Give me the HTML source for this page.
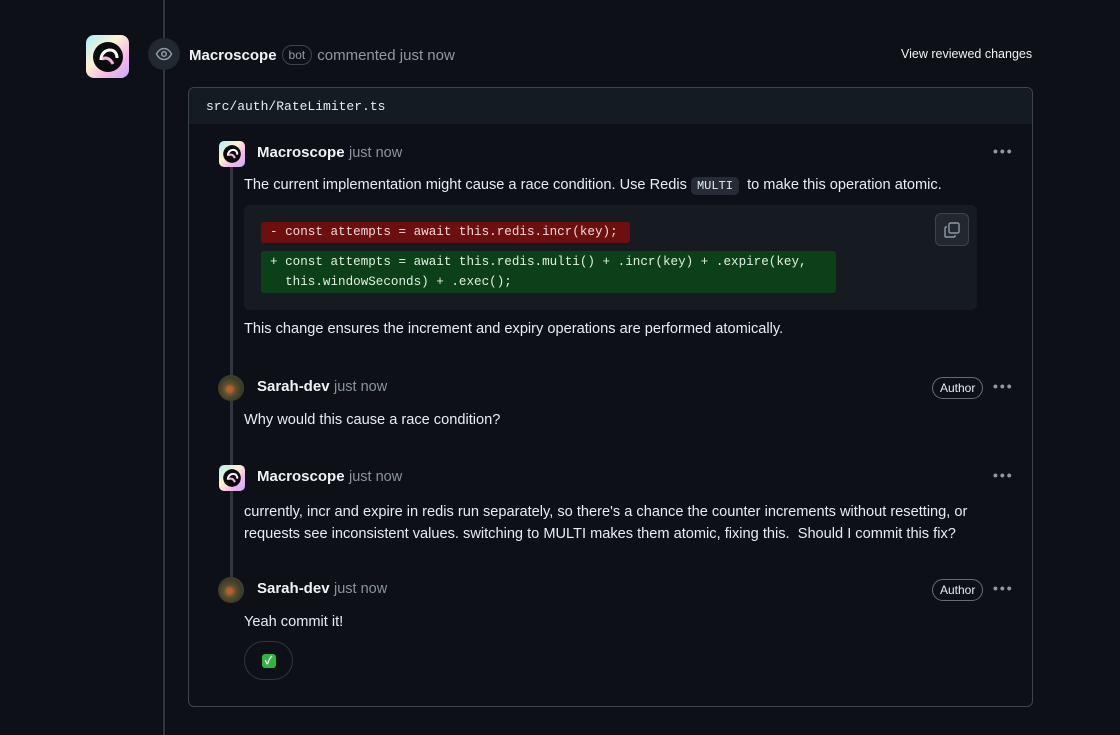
<!DOCTYPE html>
<html><head><meta charset="utf-8"><style>
*{box-sizing:border-box;margin:0;padding:0}
body{width:1120px;height:735px;background:#0d1117;color:#e6edf3;font-family:"Liberation Sans","Noto Sans CJK SC",sans-serif;position:relative;overflow:hidden}
.a{position:absolute}
.mono{font-family:"Liberation Mono",monospace;white-space:nowrap}
.logo{background:linear-gradient(135deg,#a9f0ff,#fff2d0 40%,#f7b8e8 70%,#c8a8ff);display:flex;align-items:center;justify-content:center}
.name{font-weight:bold;font-size:15px;color:#f0f3f6}
.time{color:#8b949e;font-size:14.5px}
.txt{font-size:14.6px;color:#e6edf3}
.dots{color:#9198a1;font-size:14px;letter-spacing:2px;font-weight:bold}
.author{border:1px solid #656c76;border-radius:12px;font-size:12px;padding:3px 7px;color:#e6edf3}
.av{width:26px;height:26px;border-radius:50%;background:radial-gradient(circle at 45% 55%,#b8612a 0 12%,#5a5030 30%,#3a3a28 60%,#555 100%)}
</style></head><body>
<div class="a" style="left:163px;top:0;width:2px;height:735px;background:#30363d"></div>
<div class="a logo" style="left:86px;top:35px;width:43px;height:43px;border-radius:8px">
<svg width="34" height="34" viewBox="0 0 34 34"><circle cx="17" cy="17" r="15" fill="#0b0b0b"/><path d="M10 20c0-7 5-10 9-10 5 0 7 4 7 8" stroke="#fff" stroke-width="3" fill="none"/><path d="M11 19c4-2 8-1 11 5" stroke="#f6b3df" stroke-width="3" fill="none"/></svg></div>
<div class="a" style="left:148px;top:38px;width:32px;height:32px;border-radius:50%;background:#212830;display:flex;align-items:center;justify-content:center">
<svg width="18" height="18" viewBox="0 0 18 18" fill="none" stroke="#9198a1" stroke-width="1.5"><path d="M1.5 9C3.5 5 6 3.5 9 3.5S14.5 5 16.5 9C14.5 13 12 14.5 9 14.5S3.5 13 1.5 9Z"/><circle cx="9" cy="9" r="2.3"/></svg></div>
<div class="a" style="left:189px;top:45px;display:flex;align-items:center;gap:5px"><span class="name">Macroscope</span><span style="border:1px solid #3d444d;border-radius:11px;font-size:12px;color:#9198a1;padding:2px 6px">bot</span><span style="color:#9198a1;font-size:15px">commented just now</span></div>
<div class="a" style="left:901px;top:47px;font-size:12.5px;color:#f0f3f6">View reviewed changes</div>
<div class="a" style="left:188px;top:87px;width:845px;height:620px;border:1px solid #3d444d;border-radius:6px;overflow:hidden">
<div style="height:36px;background:#151b23;padding:11px 17px;font-size:13px" class="mono">src/auth/RateLimiter.ts</div>
</div>
<div class="a" style="left:230px;top:162px;width:3px;height:428px;background:#30363d"></div>
<!-- c1 -->
<div class="a logo" style="left:219px;top:141px;width:26px;height:26px;border-radius:5px"><svg width="20" height="20" viewBox="0 0 34 34"><circle cx="17" cy="17" r="15" fill="#0b0b0b"/><path d="M10 20c0-7 5-10 9-10 5 0 7 4 7 8" stroke="#fff" stroke-width="3.5" fill="none"/><path d="M11 19c4-2 8-1 11 5" stroke="#f6b3df" stroke-width="3.5" fill="none"/></svg></div>
<div class="a" style="left:257px;top:144px"><span class="name">Macroscope</span> <span class="time">just now</span></div>
<div class="a dots" style="left:993px;top:143px">•••</div>
<div class="a txt" style="left:244px;top:177px;white-space:nowrap">The current implementation might cause a race condition. Use Redis <span class="mono" style="background:#262c36;border-radius:5px;padding:2px 6px;font-size:12px">MULTI</span>&nbsp; to make this operation atomic.</div>
<div class="a" style="left:244px;top:205px;width:733px;height:105px;background:#161b22;border-radius:6px"></div>
<div class="a" style="left:935px;top:213px;width:34px;height:33px;border:1px solid #3d444d;background:#212830;border-radius:6px;display:flex;align-items:center;justify-content:center"><svg width="18" height="18" viewBox="0 0 18 18" fill="none" stroke="#9198a1" stroke-width="1.4"><rect x="6" y="2" width="10" height="10" rx="1.5"/><path d="M4 6H3a1 1 0 0 0-1 1v8a1 1 0 0 0 1 1h8a1 1 0 0 0 1-1v-1"/></svg></div>
<div class="a mono" style="left:261px;top:222px;width:369px;height:21px;background:#6c0f0f;border-radius:3px;font-size:12.6px;padding:3px 9px;color:#f0d8d8">- const attempts = await this.redis.incr(key);</div>
<div class="a mono" style="left:261px;top:251px;width:575px;height:42px;background:#0c4019;border-radius:3px;font-size:12.6px;padding:1px 9px;line-height:20px;color:#e0f0e0">+ const attempts = await this.redis.multi() + .incr(key) + .expire(key,<br>&nbsp; this.windowSeconds) + .exec();</div>
<div class="a txt" style="left:244px;top:321px">This change ensures the increment and expiry operations are performed atomically.</div>
<!-- c2 -->
<div class="a av" style="left:218px;top:375px"></div>
<div class="a" style="left:257px;top:378px"><span class="name">Sarah-dev</span> <span class="time">just now</span></div>
<div class="a author" style="left:932px;top:377px">Author</div>
<div class="a dots" style="left:993px;top:378px">•••</div>
<div class="a txt" style="left:244px;top:412px">Why would this cause a race condition?</div>
<!-- c3 -->
<div class="a logo" style="left:219px;top:465px;width:26px;height:26px;border-radius:5px"><svg width="20" height="20" viewBox="0 0 34 34"><circle cx="17" cy="17" r="15" fill="#0b0b0b"/><path d="M10 20c0-7 5-10 9-10 5 0 7 4 7 8" stroke="#fff" stroke-width="3.5" fill="none"/><path d="M11 19c4-2 8-1 11 5" stroke="#f6b3df" stroke-width="3.5" fill="none"/></svg></div>
<div class="a" style="left:257px;top:468px"><span class="name">Macroscope</span> <span class="time">just now</span></div>
<div class="a dots" style="left:993px;top:467px">•••</div>
<div class="a txt" style="left:244px;top:501px;width:770px;line-height:22px">currently, incr and expire in redis run separately, so there's a chance the counter increments without resetting, or<br>requests see inconsistent values. switching to MULTI makes them atomic, fixing this.&nbsp; Should I commit this fix?</div>
<!-- c4 -->
<div class="a av" style="left:218px;top:577px"></div>
<div class="a" style="left:257px;top:580px"><span class="name">Sarah-dev</span> <span class="time">just now</span></div>
<div class="a author" style="left:932px;top:579px">Author</div>
<div class="a dots" style="left:993px;top:580px">•••</div>
<div class="a txt" style="left:244px;top:614px">Yeah commit it!</div>
<div class="a" style="left:244px;top:641px;width:49px;height:39px;border:1px solid #30363d;border-radius:20px;display:flex;align-items:center;justify-content:center"><span style="width:14px;height:14px;background:#2fb344;border-radius:3px;color:#fff;font-size:11px;font-weight:bold;line-height:14px;text-align:center">✓</span></div>
</body></html>
